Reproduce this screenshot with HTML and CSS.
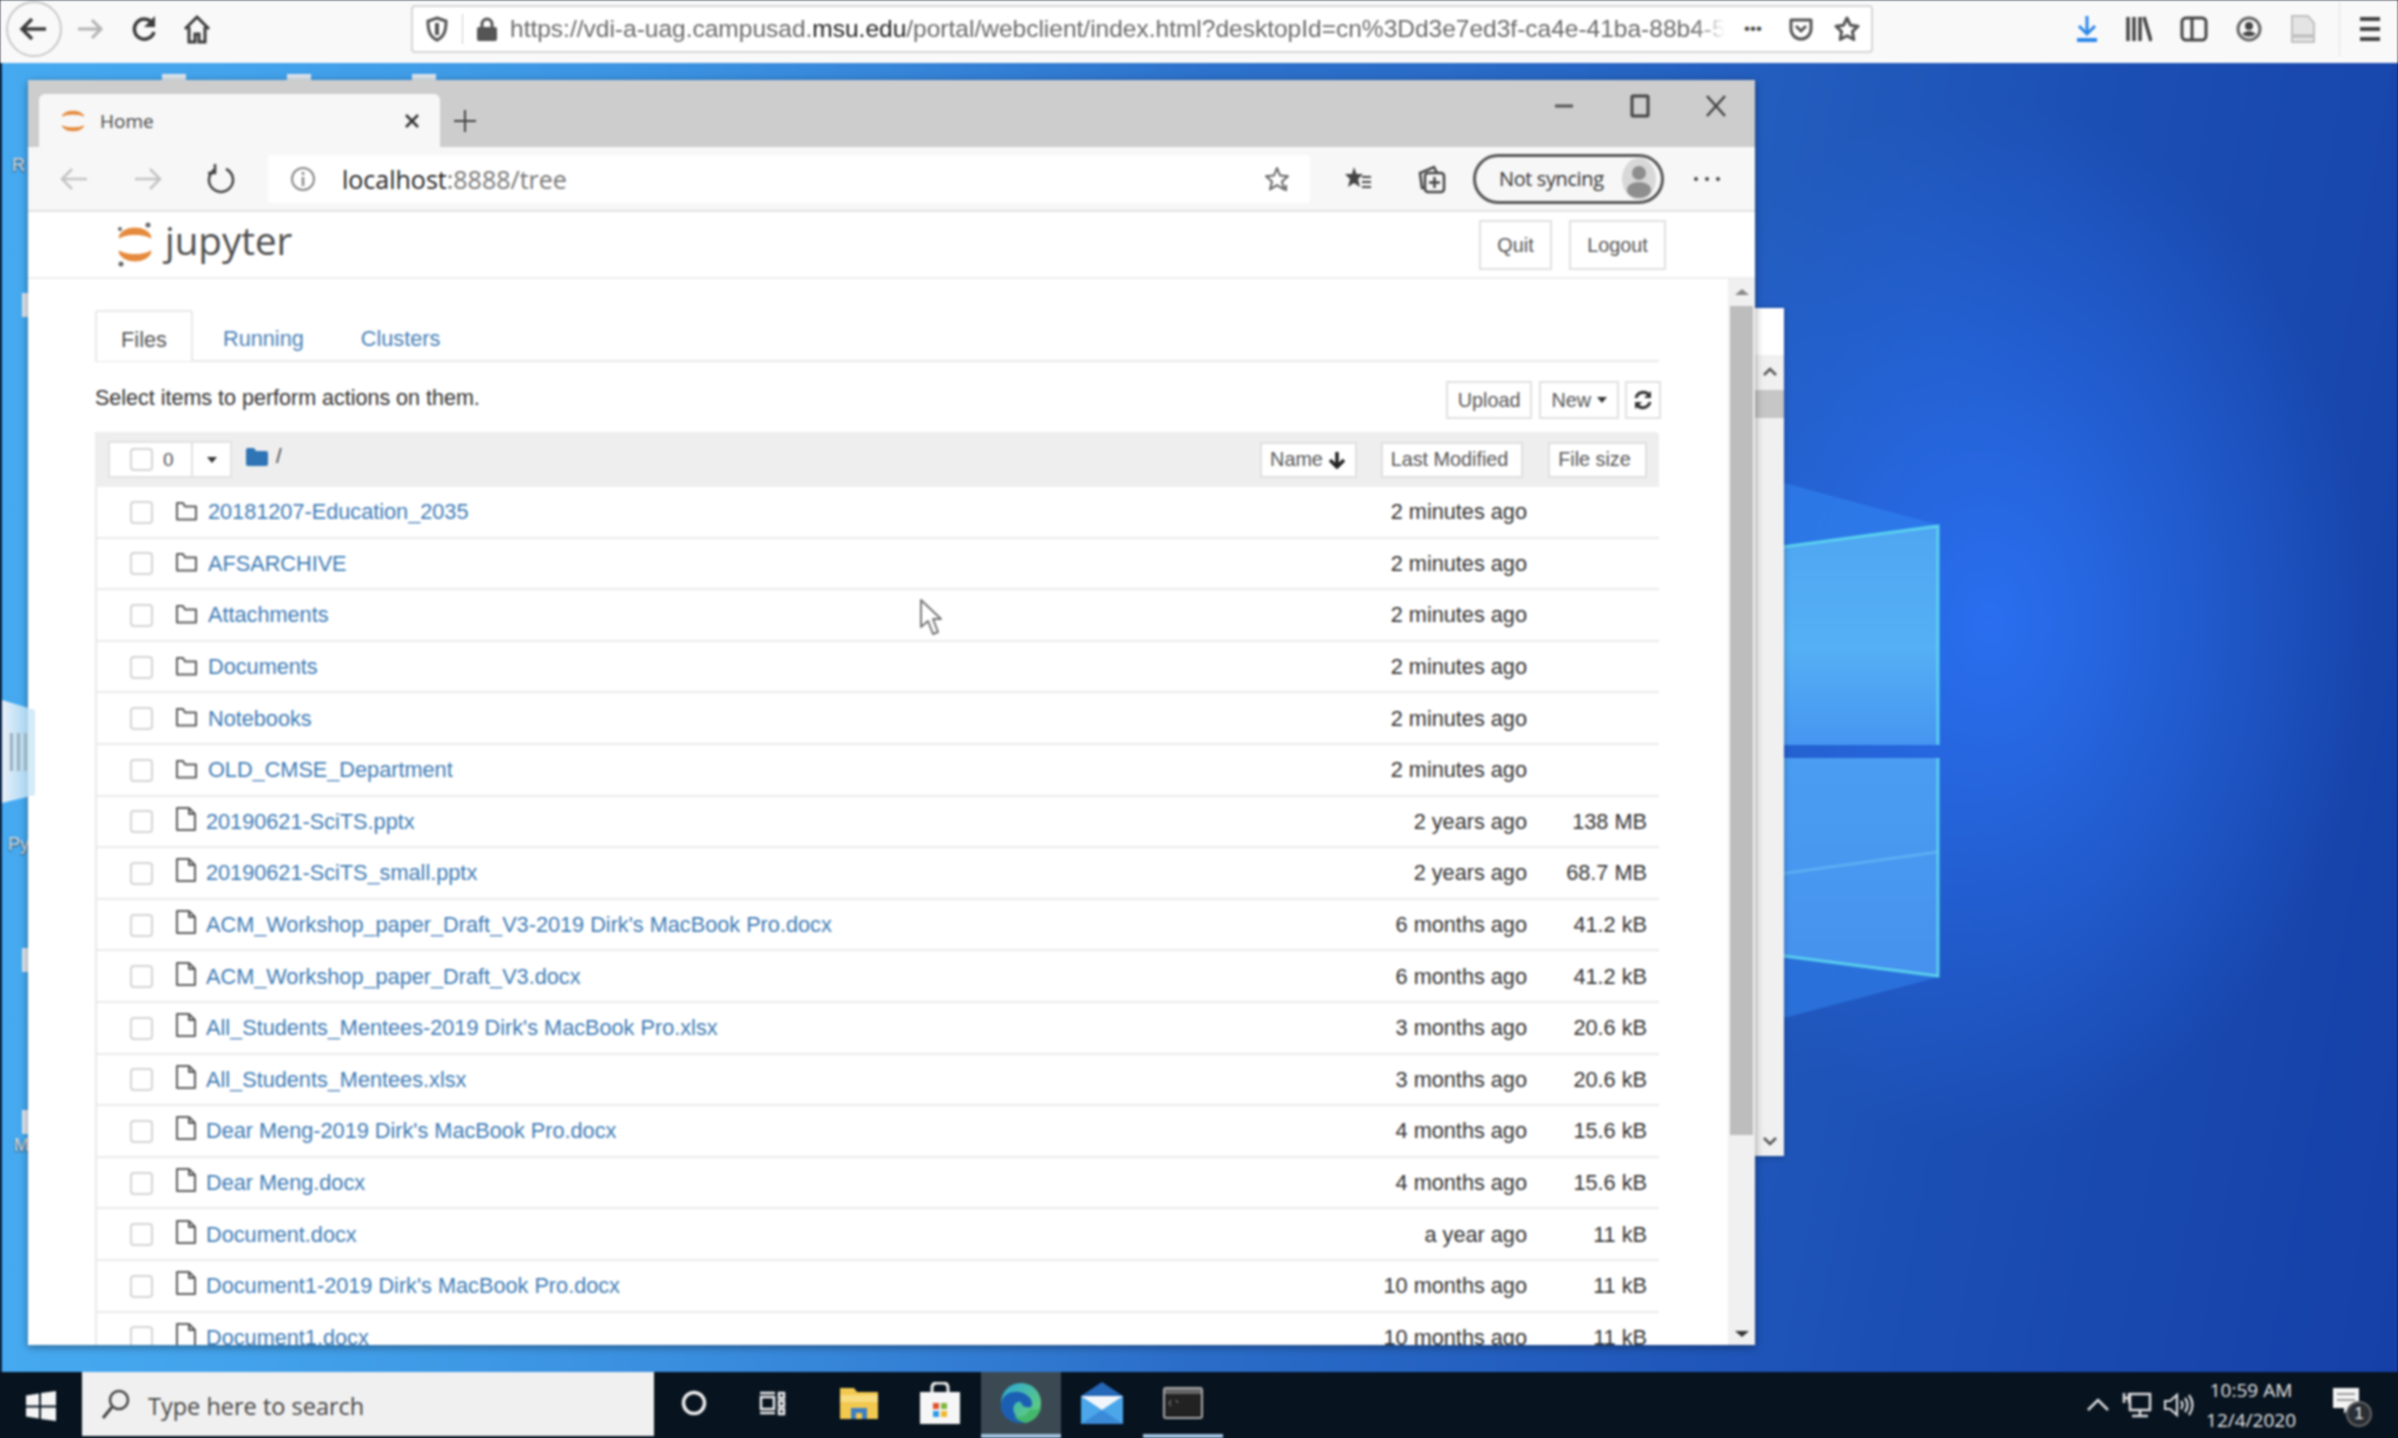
FILE: index.html
```html
<!DOCTYPE html>
<html lang="en">
<head>
    <meta charset="UTF-8">
    <title>Home</title>
    <link rel="stylesheet" href="styles.css">
</head>
<body>
    <svg class="sprites" width="0" height="0">
        <symbol id="folder" viewBox="0 0 23 20"><path d="M2 18.5h19V5.5H10L8 2H2z" fill="none" stroke="#5c5c5c" stroke-width="2" stroke-linejoin="round"/></symbol>
        <symbol id="file" viewBox="0 0 22 24"><path d="M2 23h18V7l-6-6H2zM14 1v6h6" fill="none" stroke="#5c5c5c" stroke-width="2" stroke-linejoin="round"/></symbol>
    </svg>

    <!-- outer firefox -->
    <div class="ff-bar">
        <div class="ff-back"><svg width="32" height="28" viewBox="0 0 32 28"><path d="M28 14H5M14 4L4 14l10 10" fill="none" stroke="#3c3c3c" stroke-width="3.5"/></svg></div>
        <svg class="ff-btn" width="28" height="26" viewBox="0 0 28 26"><path d="M2 13h23M16 4l9 9-9 9" fill="none" stroke="#b4b4b4" stroke-width="3"/></svg>
        <svg class="ff-btn reload" width="28" height="30" viewBox="0 0 28 30"><path d="M23 10a10 10 0 1 0 1 8" fill="none" stroke="#3c3c3c" stroke-width="3.5"/><path d="M25 2v11H14z" fill="#3c3c3c"/></svg>
        <svg class="ff-btn home" width="28" height="30" viewBox="0 0 28 30"><path d="M2 15L14 3l12 12M6 13v15h6v-8h4v8h6V13" fill="none" stroke="#3c3c3c" stroke-width="3"/></svg>
        <div class="ff-url">
            <svg width="22" height="26" viewBox="0 0 22 26"><path d="M11 2l9 3c0 10-2 16-9 19C4 21 2 15 2 5z" fill="none" stroke="#555" stroke-width="3"/><path d="M11 7v12" stroke="#555" stroke-width="4"/></svg>
            <span class="ff-url-sep"></span>
            <svg width="20" height="26" viewBox="0 0 20 26"><path d="M5 12V8a5 5 0 0 1 10 0v4" fill="none" stroke="#555" stroke-width="3"/><rect x="0" y="11" width="20" height="14" rx="2" fill="#555"/></svg>
            <div class="ff-url-text">https://vdi-a-uag.campusad.<b>msu.edu</b>/portal/webclient/index.html?desktopId=cn%3Dd3e7ed3f-ca4e-41ba-88b4-5</div>
            <span class="ff-dots">•••</span>
            <svg class="ff-pocket" width="24" height="24" viewBox="0 0 24 24"><path d="M2 3h20v9a10 10 0 0 1-20 0z" fill="none" stroke="#555" stroke-width="3" stroke-linejoin="round"/><path d="M7 9l5 5 5-5" fill="none" stroke="#555" stroke-width="3"/></svg>
            <svg class="ff-star" width="26" height="26" viewBox="0 0 26 26"><path d="M13 2l3.4 7.2 7.6 1-5.6 5.4 1.4 7.9-6.8-3.8-6.8 3.8 1.4-7.9L2 10.200l7.600-1z" fill="none" stroke="#555" stroke-width="3" stroke-linejoin="round"/></svg>
        </div>
        <div class="ff-tools">
            <svg width="22" height="28" viewBox="0 0 22 28"><path d="M11 1v18M3 11l8 8 8-8" fill="none" stroke="#2a86e8" stroke-width="3"/><path d="M1 25h20" stroke="#2a86e8" stroke-width="4"/></svg>
            <svg width="26" height="26" viewBox="0 0 26 26"><path d="M2 1v24M8 1v24M14 1v24M18 1l7 24" fill="none" stroke="#444" stroke-width="3.500"/></svg>
            <svg width="28" height="26" viewBox="0 0 28 26"><rect x="2" y="2" width="24" height="22" rx="4" fill="none" stroke="#444" stroke-width="3"/><path d="M12 2v22" stroke="#444" stroke-width="3"/></svg>
            <svg width="26" height="26" viewBox="0 0 26 26"><circle cx="13" cy="13" r="11" fill="none" stroke="#666" stroke-width="3"/><circle cx="13" cy="10" r="4" fill="#444"/><path d="M6 18q7-6 14 0q-7 5-14 0z" fill="#444"/></svg>
            <svg width="26" height="30" viewBox="0 0 26 30"><path d="M2 2h16l6 7v19H2z" fill="#e4e4e4" stroke="#c0c0c0" stroke-width="2"/><path d="M3 22h20" stroke="#bbb" stroke-width="3"/></svg>
            <span class="ff-tools-sep"></span>
            <div class="burger"><i></i><i></i><i></i></div>
        </div>
    </div>

    <!-- desktop -->
    <div class="desktop">
        <svg class="wallpaper" width="2398" height="1309" viewBox="0 63 2398 1309">
            <defs>
                <linearGradient id="pane1" x1="0" y1="0" x2="0" y2="1"><stop offset="0" stop-color="#4fa6f2"/><stop offset=".55" stop-color="#55b0f5"/><stop offset="1" stop-color="#4696f0"/></linearGradient>
                <linearGradient id="pane2" x1="0" y1="0" x2="0" y2="1"><stop offset="0" stop-color="#4a9df2"/><stop offset="1" stop-color="#4692ee"/></linearGradient>
            </defs>
            <polygon points="1939,525 1700,460 1700,560" fill="#2f80ee" opacity=".7"/>
            <polygon points="1939,977 1700,945 1700,1040" fill="#2f7be6" opacity=".7"/>
            <polygon points="1938,526 1700,558 1700,745 1938,745" fill="url(#pane1)"/>
            <polygon points="1938,758 1700,758 1700,945 1938,976" fill="url(#pane2)"/>
            <path d="M1700 885L1938 852" stroke="#62b4f6" stroke-width="3" opacity=".8"/>
            <path d="M1700 558L1938 526V745M1938 758V976L1700 945" fill="none" stroke="#5fdcf0" stroke-width="3" opacity=".85"/>
        </svg>

        <span class="desk-bit" id="bit-a"></span>
        <span class="desk-bit" id="bit-b"></span>
        <span class="desk-bit" id="bit-c"></span>
        <span class="desk-side" id="side-a"></span>
        <span class="desk-side" id="side-b"></span>
        <span class="desk-side" id="side-c"></span>
        <span class="desk-label" id="label-r">R</span>
        <span class="desk-label" id="label-py">Py</span>
        <span class="desk-label" id="label-m">M</span>

        <div class="back-window">
            <div class="back-top"></div>
            <div class="back-track">
                <svg width="16" height="10" viewBox="0 0 16 10"><path d="M2 8l6-6 6 6" fill="none" stroke="#555" stroke-width="2.500"/></svg>
                <div class="back-thumb"></div>
                <svg class="back-down" width="16" height="10" viewBox="0 0 16 10"><path d="M2 2l6 6 6-6" fill="none" stroke="#555" stroke-width="2.500"/></svg>
            </div>
        </div>

        <!-- edge window -->
        <div class="window">
            <div class="win-title">
                <div class="tab">
                    <svg width="26" height="30" viewBox="0 0 26 30"><path d="M2 10a12 8 0 0 1 22 0a14 5 0 0 0-22 0zM2 20a12 8 0 0 0 22 0a14 5 0 0 1-22 0z" fill="#e58a3c" stroke="#e58a3c"/></svg>
                    <span class="tab-label">Home</span>
                    <svg class="tab-close" width="16" height="16" viewBox="0 0 16 16"><path d="M2 2l12 12M14 2L2 14" stroke="#333" stroke-width="2.500"/></svg>
                </div>
                <svg class="tab-new" width="24" height="24" viewBox="0 0 24 24"><path d="M12 1v22M1 12h22" stroke="#444" stroke-width="2"/></svg>
                <div class="win-controls">
                    <svg width="20" height="20" viewBox="0 0 20 20"><path d="M1 10h18" stroke="#555" stroke-width="3"/></svg>
                    <svg width="20" height="24" viewBox="0 0 20 24"><rect x="2" y="2" width="16" height="20" rx="1" fill="none" stroke="#444" stroke-width="3"/></svg>
                    <svg width="20" height="22" viewBox="0 0 20 22"><path d="M1 1l18 20M19 1L1 21" stroke="#444" stroke-width="2.500"/></svg>
                </div>
            </div>
            <div class="win-toolbar">
                <svg class="nav-back" width="28" height="26" viewBox="0 0 28 26"><path d="M27 13H2M12 3L2 13l10 10" fill="none" stroke="#c4c4c4" stroke-width="2.500"/></svg>
                <svg class="nav-forward" width="28" height="26" viewBox="0 0 28 26"><path d="M1 13h25M16 3l10 10-10 10" fill="none" stroke="#c4c4c4" stroke-width="2.500"/></svg>
                <svg class="nav-reload" width="30" height="32" viewBox="0 0 30 32"><path d="M10 6a12 12 0 1 0 10 0" fill="none" stroke="#444" stroke-width="2.500"/><path d="M9 1v9H2" fill="none" stroke="#444" stroke-width="2.500"/></svg>
                <div class="edge-url">
                    <svg width="26" height="28" viewBox="0 0 26 28"><circle cx="13" cy="14" r="11" fill="none" stroke="#888" stroke-width="2"/><path d="M13 12v9M13 7v3" stroke="#888" stroke-width="2.500"/></svg>
                    <span class="edge-url-text">localhost<em>:8888/tree</em></span>
                    <svg class="edge-star" width="28" height="28" viewBox="0 0 28 28"><path d="M13 3l3 7.500 8 .7-6 5.300 2 8-7-4.300-7 4.300 2-8-6-5.300 8-.7z" fill="none" stroke="#666" stroke-width="2" stroke-linejoin="round"/><path d="M22 20v6" stroke="#666" stroke-width="2"/></svg>
                </div>
                <svg class="edge-tool" width="28" height="28" viewBox="0 0 28 28"><path d="M10 2l2.500 7H19l-5 5 2 8-6-4-6 4 2-8-5-5h7z" fill="#444"/><path d="M18 12h9M18 17h9M18 22h9" stroke="#444" stroke-width="2"/></svg>
                <svg class="edge-tool" width="28" height="30" viewBox="0 0 28 30"><rect x="7" y="9" width="19" height="19" rx="3" fill="none" stroke="#444" stroke-width="2.500"/><path d="M7 24H4L2 9l14-6 3 6" fill="none" stroke="#444" stroke-width="2.500"/><path d="M16.500 13v11M11 18.500h11" stroke="#444" stroke-width="2.500"/></svg>
                <div class="sync-pill">
                    <span>Not syncing</span>
                    <svg width="34" height="42" viewBox="0 0 34 42"><ellipse cx="17" cy="21" rx="17" ry="21" fill="#d8d8d8"/><circle cx="17" cy="15" r="7" fill="#8e8e8e"/><ellipse cx="17" cy="32" rx="12" ry="8" fill="#8e8e8e"/></svg>
                </div>
                <div class="edge-more"><i></i><i></i><i></i></div>
            </div>

            <div class="jp-header">
                <svg class="jp-logo" width="38" height="46" viewBox="0 0 38 46"><path d="M3 17a16 10 0 0 1 32 0a20 9 0 0 0-32 0zM3 30a16 10 0 0 0 32 0a20 9 0 0 1-32 0z" fill="#e58a3c" stroke="#e58a3c"/><circle cx="32" cy="4" r="2.500" fill="#666"/><circle cx="4" cy="8" r="2" fill="#666"/><circle cx="5" cy="43" r="2.500" fill="#666"/></svg>
                <span class="jp-name">jupyter</span>
                <a class="btn jp-quit">Quit</a>
                <a class="btn jp-logout">Logout</a>
            </div>

            <div class="win-page">
                <div class="page-main">
                    <div class="nav-tabs">
                        <span class="nav-tab active">Files</span>
                        <span class="nav-tab">Running</span>
                        <span class="nav-tab">Clusters</span>
                    </div>

                    <div class="action-row">
                        <span class="hint">Select items to perform actions on them.</span>
                        <a class="btn btn-small">Upload</a>
                        <a class="btn btn-small">New <i class="caret"></i></a>
                        <a class="btn btn-small btn-icon"><svg width="20" height="20" viewBox="0 0 20 20"><path d="M3 8a7.500 7.500 0 0 1 13-3M17 12a7.500 7.500 0 0 1-13 3" fill="none" stroke="#333" stroke-width="3"/><path d="M18 1v7h-7zM2 19v-7h7z" fill="#333"/></svg></a>
                    </div>

                    <div class="list">
                        <div class="list-head">
                            <div class="select-group">
                                <div class="select-left"><span class="check"></span><span>0</span></div>
                                <div class="select-right"><i class="caret"></i></div>
                            </div>
                            <svg class="crumb-icon" width="22" height="18" viewBox="0 0 22 18"><path d="M0 2q0-2 2-2h6l2 3h10q2 0 2 2v11q0 2-2 2H2q-2 0-2-2z" fill="#2f75b5"/></svg>
                            <span class="crumb">/</span>
                            <a class="btn sort sort-name">Name <svg width="16" height="18" viewBox="0 0 16 18"><path d="M8 1v15M1 9l7 7 7-7" fill="none" stroke="#222" stroke-width="3.500"/></svg></a>
                            <a class="btn sort sort-mod">Last Modified</a>
                            <a class="btn sort sort-size">File size</a>
                        </div>

                        <div class="row"><span class="check"></span><svg class="ico"><use href="#folder"/></svg><a class="name">20181207-Education_2035</a><span class="time">2 minutes ago</span><span class="size"></span></div>
                        <div class="row"><span class="check"></span><svg class="ico"><use href="#folder"/></svg><a class="name">AFSARCHIVE</a><span class="time">2 minutes ago</span><span class="size"></span></div>
                        <div class="row"><span class="check"></span><svg class="ico"><use href="#folder"/></svg><a class="name">Attachments</a><span class="time">2 minutes ago</span><span class="size"></span></div>
                        <div class="row"><span class="check"></span><svg class="ico"><use href="#folder"/></svg><a class="name">Documents</a><span class="time">2 minutes ago</span><span class="size"></span></div>
                        <div class="row"><span class="check"></span><svg class="ico"><use href="#folder"/></svg><a class="name">Notebooks</a><span class="time">2 minutes ago</span><span class="size"></span></div>
                        <div class="row"><span class="check"></span><svg class="ico"><use href="#folder"/></svg><a class="name">OLD_CMSE_Department</a><span class="time">2 minutes ago</span><span class="size"></span></div>
                        <div class="row"><span class="check"></span><svg class="ico file"><use href="#file"/></svg><a class="name">20190621-SciTS.pptx</a><span class="time">2 years ago</span><span class="size">138 MB</span></div>
                        <div class="row"><span class="check"></span><svg class="ico file"><use href="#file"/></svg><a class="name">20190621-SciTS_small.pptx</a><span class="time">2 years ago</span><span class="size">68.7 MB</span></div>
                        <div class="row"><span class="check"></span><svg class="ico file"><use href="#file"/></svg><a class="name">ACM_Workshop_paper_Draft_V3-2019 Dirk's MacBook Pro.docx</a><span class="time">6 months ago</span><span class="size">41.2 kB</span></div>
                        <div class="row"><span class="check"></span><svg class="ico file"><use href="#file"/></svg><a class="name">ACM_Workshop_paper_Draft_V3.docx</a><span class="time">6 months ago</span><span class="size">41.2 kB</span></div>
                        <div class="row"><span class="check"></span><svg class="ico file"><use href="#file"/></svg><a class="name">All_Students_Mentees-2019 Dirk's MacBook Pro.xlsx</a><span class="time">3 months ago</span><span class="size">20.6 kB</span></div>
                        <div class="row"><span class="check"></span><svg class="ico file"><use href="#file"/></svg><a class="name">All_Students_Mentees.xlsx</a><span class="time">3 months ago</span><span class="size">20.6 kB</span></div>
                        <div class="row"><span class="check"></span><svg class="ico file"><use href="#file"/></svg><a class="name">Dear Meng-2019 Dirk's MacBook Pro.docx</a><span class="time">4 months ago</span><span class="size">15.6 kB</span></div>
                        <div class="row"><span class="check"></span><svg class="ico file"><use href="#file"/></svg><a class="name">Dear Meng.docx</a><span class="time">4 months ago</span><span class="size">15.6 kB</span></div>
                        <div class="row"><span class="check"></span><svg class="ico file"><use href="#file"/></svg><a class="name">Document.docx</a><span class="time">a year ago</span><span class="size">11 kB</span></div>
                        <div class="row"><span class="check"></span><svg class="ico file"><use href="#file"/></svg><a class="name">Document1-2019 Dirk's MacBook Pro.docx</a><span class="time">10 months ago</span><span class="size">11 kB</span></div>
                        <div class="row"><span class="check"></span><svg class="ico file"><use href="#file"/></svg><a class="name">Document1.docx</a><span class="time">10 months ago</span><span class="size">11 kB</span></div>
                    </div>
                </div>
                <div class="page-scroll">
                    <i class="tri-up"></i>
                    <div class="page-thumb"></div>
                    <i class="tri-down"></i>
                </div>
            </div>
        </div>

        <svg class="cursor" width="24" height="38" viewBox="0 0 24 38"><path d="M2 2v27l7-6 5 13 5-2-5-13h8z" fill="#fff" stroke="#777" stroke-width="2" stroke-linejoin="round"/></svg>
        <div class="side-handle"><i></i><i></i><i></i></div>
    </div>

    <!-- taskbar -->
    <div class="taskbar">
        <svg class="start" width="30" height="30" viewBox="0 0 30 30"><path d="M0 4.500l13-2v12H0zM15 2l15-2v14.500H15zM0 16.500h13v11l-13-2zM15 16.500h15V30l-15-2z" fill="#f4f4f4"/></svg>
        <div class="search">
            <svg width="30" height="32" viewBox="0 0 30 32"><circle cx="18" cy="12" r="9" fill="none" stroke="#444" stroke-width="2.500"/><path d="M11 19L2 30" stroke="#444" stroke-width="3"/></svg>
            <span>Type here to search</span>
        </div>
        <div class="task-icons">
            <div class="task"><svg width="26" height="26" viewBox="0 0 26 26"><circle cx="13" cy="13" r="10.500" fill="none" stroke="#eee" stroke-width="3.500"/></svg></div>
            <div class="task task-view"><svg width="28" height="26" viewBox="0 0 28 26"><path d="M2 3h15M2 23h15M3 7h13v12H3zM21 3h5v5h-5zM21 11h5v5h-5zM21 19h5v5h-5z" fill="none" stroke="#eee" stroke-width="2.500"/></svg></div>
            <div class="task"><svg width="38" height="32" viewBox="0 0 38 32"><path d="M0 1h14l3 4h21v27H0z" fill="#f2c84f"/><rect x="0" y="8" width="38" height="7" fill="#f8dc80"/><path d="M11 32V21h16v11h-5v-6h-6v6z" fill="#3d7fc4"/></svg></div>
            <div class="task"><svg width="40" height="42" viewBox="0 0 40 42"><path d="M12 10V6q0-5 5-5h6q5 0 5 5v4" fill="none" stroke="#eee" stroke-width="3"/><rect x="0" y="10" width="40" height="32" fill="#f6f6f6"/><rect x="13" y="21" width="6" height="6" fill="#e0512f"/><rect x="21" y="21" width="6" height="6" fill="#7fb83c"/><rect x="13" y="29" width="6" height="6" fill="#2e9be5"/><rect x="21" y="29" width="6" height="6" fill="#f2b731"/></svg></div>
            <div class="task active"><svg width="42" height="42" viewBox="0 0 42 42"><defs><linearGradient id="edgeg" x1="0" y1="0" x2="1" y2="1"><stop offset="0" stop-color="#2ba8d8"/><stop offset="1" stop-color="#6cd46a"/></linearGradient></defs><circle cx="21" cy="21" r="20" fill="url(#edgeg)"/><path d="M1 22C2 10 18 6 28 14c4 3 5 8 3 11-4 1-9 0-10-5-7-2-11 8-4 15 3 3 6 5 10 6C12 43 0 35 1 22z" fill="#1b5fb4"/><path d="M30 27c3 1 8 1 11-2-1 8-7 14-15 16-5-1-9-3-12-7 6 3 13 0 16-7z" fill="#43b76c"/></svg></div>
            <div class="task"><svg width="42" height="42" viewBox="0 0 42 42"><path d="M21 0L0 14h42z" fill="#2567b8"/><rect x="0" y="14" width="42" height="28" fill="#4ba6ea"/><path d="M0 14h42L21 28z" fill="#f2f6fa"/><path d="M0 42l21-14 21 14z" fill="#3a8ad8"/></svg></div>
            <div class="task running"><svg width="40" height="32" viewBox="0 0 40 32"><rect x="1" y="1" width="38" height="30" rx="2" fill="#222" stroke="#aaa" stroke-width="2"/><rect x="2" y="2" width="36" height="5" fill="#666"/><path d="M8 13l-2 3 2 3M13 13l2 3" stroke="#999" fill="none"/></svg></div>
        </div>
        <div class="tray">
            <svg width="24" height="14" viewBox="0 0 24 14"><path d="M2 12L12 2l10 10" fill="none" stroke="#ddd" stroke-width="2.500"/></svg>
            <svg width="30" height="26" viewBox="0 0 30 26"><path d="M8 2h20v16H8zM18 18v6M10 24h16M2 1v10M7 1v10M1 6h7" fill="none" stroke="#ddd" stroke-width="2.500"/></svg>
            <svg width="30" height="26" viewBox="0 0 30 26"><path d="M1 9h5l7-6v20l-7-6H1zM17 9q3 4 0 8M21 6q5 7 0 14M25 3q7 10 0 20" fill="none" stroke="#ddd" stroke-width="2.200"/></svg>
            <div class="clock"><span>10:59 AM</span><span>12/4/2020</span></div>
            <div class="notify">
                <svg width="30" height="30" viewBox="0 0 30 30"><path d="M1 1h26v20h-10l-5 6v-6H1z" fill="#f4f4f4"/><path d="M5 7h18M5 13h18" stroke="#999" stroke-width="2"/></svg>
                <span class="notify-badge">1</span>
            </div>
        </div>
    </div>
</body>
</html>
```

FILE: styles.css
```css
* {
    box-sizing: border-box;
}
html, body {
    margin: 0;
    height: 1438px;
    overflow: hidden;
}
body {
    width: 2398px;
    display: flex;
    flex-direction: column;
    font-family: "Liberation Sans", Arial, sans-serif;
    font-size: 21.7px;
    color: #333;
    background: #07131f;
    filter: blur(0.8px);
}
svg {
    flex: none;
    display: block;
}
.sprites {
    position: absolute;
}

/* outer firefox */
.ff-bar {
    height: 63px;
    flex: none;
    padding-bottom: 5px;
    display: flex;
    align-items: center;
    background: #f9f9fa;
}
.ff-back {
    width: 56px;
    height: 56px;
    margin-left: 6px;
    display: flex;
    align-items: center;
    justify-content: center;
    border: 2px solid #c8c8c8;
    border-radius: 50%;
}
.ff-btn {
    margin-left: 14px;
}
.ff-btn.reload {
    margin-left: 26px;
}
.ff-btn.home {
    margin-left: 25px;
}
.ff-url {
    width: 1462px;
    height: 48px;
    margin-left: 200px;
    padding: 0 0 0 13px;
    display: flex;
    align-items: center;
    gap: 14px;
    background: #fff;
    border: 2px solid #d6d6d8;
    border-radius: 4px;
}
.ff-url-sep {
    width: 1px;
    height: 30px;
    background: #ccc;
}
.ff-url-text {
    width: 1215px;
    margin-left: -1px;
    overflow: hidden;
    white-space: nowrap;
    font-size: 24.5px;
    color: #6a6a6a;
    -webkit-mask-image: linear-gradient(to left, transparent, #000 30px);
    mask-image: linear-gradient(to left, transparent, #000 30px);
}
.ff-url-text b {
    font-weight: normal;
    color: #222;
}
.ff-dots {
    font-size: 17px;
    color: #444;
    margin-left: 5px;
}
.ff-pocket {
    margin-left: 13px;
}
.ff-star {
    margin-left: 7px;
}
.ff-tools {
    flex: 1;
    padding-left: 203px;
    display: flex;
    align-items: center;
    gap: 28px;
}
.ff-tools-sep {
    width: 1px;
    height: 54px;
    margin-left: -5px;
    background: #e2e2e2;
}
.burger {
    display: flex;
    flex-direction: column;
    gap: 6px;
    margin-left: -8px;
}
.burger i {
    width: 20px;
    height: 4px;
    background: #444;
}

/* desktop and wallpaper */
.desktop {
    flex: 1;
    position: relative;
    overflow: hidden;
    background:
        radial-gradient(ellipse 380px 520px at 1990px 560px, #2a6ff0 0%, rgba(42, 111, 240, 0) 100%),
        linear-gradient(90deg, rgba(70, 170, 240, 1) 0, rgba(70, 170, 240, 0) 50%),
        linear-gradient(100deg, #3a8ee0 0%, #2a6cc8 55%, #1c4fb4 80%, #1540a8 100%);
    box-shadow: inset 2px 0 0 #0a2a55;
}
.wallpaper {
    position: absolute;
    left: 0;
    top: 0;
}
.desk-bit {
    position: absolute;
    top: 11px;
    width: 24px;
    height: 6px;
    background: #dfe7ee;
}
#bit-a { left: 162px; }
#bit-b { left: 287px; }
#bit-c { left: 412px; }
.desk-side {
    position: absolute;
    left: 22px;
    width: 6px;
    height: 24px;
    background: #dfe7ee;
}
#side-a { top: 230px; }
#side-b { top: 885px; }
#side-c { top: 1047px; }
.desk-label {
    position: absolute;
    color: #d8dee4;
    font-size: 18px;
    text-shadow: 0 1px 2px #333;
}
#label-r { left: 12px; top: 92px; }
#label-py { left: 8px; top: 771px; }
#label-m { left: 14px; top: 1072px; }

.back-window {
    position: absolute;
    left: 1755px;
    top: 245px;
    width: 29px;
    height: 848px;
    display: flex;
    flex-direction: column;
    box-shadow: 0 1px 6px rgba(0, 0, 0, 0.3);
}
.back-top {
    height: 47px;
    background: #fff;
}
.back-track {
    flex: 1;
    display: flex;
    flex-direction: column;
    align-items: center;
    padding: 12px 0 10px;
    background: #f0f0f0;
}
.back-thumb {
    width: 100%;
    height: 28px;
    margin-top: 13px;
    background: #c6c6c6;
}
.back-down {
    margin-top: auto;
}

/* edge window */
.window {
    position: absolute;
    left: 28px;
    top: 17px;
    width: 1727px;
    height: 1265px;
    display: flex;
    flex-direction: column;
    background: #fff;
    box-shadow: 0 2px 8px rgba(0, 0, 0, 0.4);
}
.win-title {
    height: 67px;
    flex: none;
    display: flex;
    align-items: flex-end;
    background: #cdcdcd;
}
.tab {
    width: 401px;
    height: 53px;
    margin-left: 11px;
    padding: 0 21px;
    display: flex;
    align-items: center;
    background: #f7f7f7;
    border-radius: 6px 6px 0 0;
}
.tab-label {
    margin-left: 14px;
    font-family: "Open Sans", sans-serif;
    font-size: 19px;
    color: #444;
}
.tab-close {
    margin-left: auto;
    margin-right: -1px;
}
.tab-new {
    margin: 0 0 14px 13px;
}
.win-controls {
    margin-left: auto;
    align-self: flex-start;
    padding: 14px 29px 0 0;
    display: flex;
    align-items: center;
    gap: 56px;
}
.win-toolbar {
    height: 65px;
    flex: none;
    display: flex;
    align-items: center;
    background: #f7f7f7;
    border-bottom: 2px solid #e2e2e2;
}
.nav-back {
    margin-left: 32px;
}
.nav-forward {
    margin-left: 46px;
}
.nav-reload {
    margin-left: 44px;
}
.edge-url {
    width: 1042px;
    height: 48px;
    margin-left: 32px;
    padding: 0 18px 0 22px;
    display: flex;
    align-items: center;
    background: #fff;
    border-radius: 3px;
}
.edge-url-text {
    margin-left: 26px;
    font-family: "Open Sans", sans-serif;
    font-size: 25px;
    color: #222;
}
.edge-url-text em {
    font-style: normal;
    color: #777;
}
.edge-star {
    margin-left: auto;
}
.edge-tool {
    margin-left: 34px;
}
.edge-tool + .edge-tool {
    margin-left: 46px;
}
.sync-pill {
    width: 191px;
    height: 50px;
    margin-left: 27px;
    padding: 0 5px 0 23px;
    display: flex;
    align-items: center;
    justify-content: space-between;
    border: 3px solid #555;
    border-radius: 25px;
    font-family: "Open Sans", sans-serif;
    font-size: 20px;
    letter-spacing: -0.4px;
    color: #333;
}
.edge-more {
    margin-left: 30px;
    display: flex;
    gap: 7px;
}
.edge-more i {
    width: 4px;
    height: 4px;
    background: #444;
    border-radius: 50%;
}
.win-page {
    flex: 1;
    min-height: 0;
    display: flex;
}
.page-main {
    flex: 1;
    min-width: 0;
    padding: 32px 69px 0 67px;
    overflow: hidden;
}

/* jupyter */
.jp-header {
    height: 67px;
    flex: none;
    padding: 8px 89px 0 90px;
    display: flex;
    align-items: flex-start;
    border-bottom: 2px solid #eee;
}
.jp-logo {
    margin: 1px 0 0 -2px;
}
.jp-name {
    margin: -3px 0 0 11px;
    font-family: "Open Sans", sans-serif;
    font-size: 38.5px;
    line-height: 46px;
    color: #4e4e4e;
}
.btn {
    display: flex;
    align-items: center;
    justify-content: center;
    gap: 6px;
    background: #fff;
    border: 2px solid #e0e0e0;
    color: #555;
    font-size: 19.8px;
}
.jp-quit {
    width: 73px;
    height: 50px;
    margin-left: auto;
}
.jp-logout {
    width: 97px;
    height: 50px;
    margin-left: 17px;
}
.nav-tabs {
    height: 51px;
    display: flex;
    gap: 30px;
    align-items: center;
    border-bottom: 2px solid #e8e8e8;
}
.nav-tab {
    padding-top: 6px;
    color: #4a82b8;
    font-size: 21.7px;
}
.nav-tab:last-child {
    margin-left: 27px;
}
.nav-tab.active {
    width: 98px;
    height: 51px;
    display: flex;
    align-items: center;
    justify-content: center;
    background: #fff;
    border: 2px solid #e8e8e8;
    border-bottom: 0;
    border-radius: 3px 3px 0 0;
    color: #555;
}
.action-row {
    height: 38px;
    margin-top: 19px;
    display: flex;
    align-items: center;
    gap: 6px;
}
.hint {
    margin-right: auto;
    margin-top: -3px;
    font-size: 21.5px;
}
.btn-small {
    height: 38px;
    padding: 0 10px;
    min-width: 83px;
}
.btn-small + .btn-small {
    min-width: 78px;
}
.btn-small.btn-icon {
    min-width: 36px;
    width: 36px;
    padding: 0;
    margin-right: -2px;
}
.btn-small:first-of-type {
    margin-right: 1px;
}
.caret {
    width: 0;
    height: 0;
    border: 5px solid transparent;
    border-top: 6px solid #333;
    border-bottom: 0;
}
.list {
    margin-top: 13px;
    border-left: 2px solid #e8e8e8;
}
.list-head {
    height: 55px;
    margin-left: -2px;
    padding-left: 13px;
    padding-right: 12px;
    display: flex;
    align-items: center;
    background: #eee;
    border-radius: 4px 4px 0 0;
}
.select-group {
    width: 124px;
    height: 37px;
    display: flex;
    background: #fff;
    border: 2px solid #e2e2e2;
}
.select-left {
    width: 81px;
    padding-left: 20px;
    display: flex;
    align-items: center;
    gap: 10px;
    color: #555;
    font-size: 19px;
}
.select-right {
    flex: 1;
    display: flex;
    align-items: center;
    justify-content: center;
    border-left: 2px solid #e2e2e2;
}
.crumb-icon {
    margin: -6px 0 0 14px;
}
.crumb {
    margin: -6px 0 0 8px;
    color: #444;
    font-size: 20px;
}
.sort {
    height: 36px;
    font-size: 19.8px;
}
.sort-name {
    width: 97px;
    margin-left: auto;
    padding-right: 2px;
}
.sort-mod {
    width: 142px;
    margin-left: 24px;
    padding-right: 5px;
}
.sort-size {
    width: 99px;
    margin-left: 25px;
    padding-right: 6px;
}
.check {
    flex: none;
    width: 23px;
    height: 23px;
    background: #fff;
    border: 2px solid #d4d4d4;
    border-radius: 4px;
}
.row {
    height: 51.6px;
    padding-top: 1px;
    padding-left: 33px;
    padding-right: 12px;
    display: flex;
    align-items: center;
    border-bottom: 2px solid #eaeaea;
}
.ico {
    width: 23px;
    height: 20px;
    margin: -3px 10px 0 22px;
}
.ico.file {
    width: 22px;
    height: 24px;
    margin: -6px 9px 0 22px;
}
.name {
    flex: 1;
    color: #3f7cb5;
    white-space: nowrap;
}
.time {
    width: 220px;
    text-align: right;
}
.size {
    width: 120px;
    text-align: right;
}

/* inner scrollbar */
.page-scroll {
    width: 27px;
    flex: none;
    padding: 10px 2px 8px;
    display: flex;
    flex-direction: column;
    align-items: center;
    background: #f0f0f0;
}
.tri-up, .tri-down {
    width: 0;
    height: 0;
    border: 7px solid transparent;
}
.tri-up {
    border-top: 0;
    border-bottom: 6px solid #888;
}
.tri-down {
    margin-top: auto;
    border-bottom: 0;
    border-top: 6px solid #333;
}
.page-thumb {
    width: 100%;
    height: 829px;
    margin-top: 11px;
    background: #bdbdbd;
}

.cursor {
    position: absolute;
    left: 919px;
    top: 535px;
}
.side-handle {
    position: absolute;
    left: 2px;
    top: 637px;
    width: 33px;
    height: 103px;
    padding-left: 8px;
    display: flex;
    align-items: center;
    gap: 4px;
    background: linear-gradient(90deg, rgba(240, 244, 248, 0.95), rgba(190, 225, 245, 0.7));
    border-radius: 0 8px 8px 0;
    clip-path: polygon(0 0, 100% 10px, 100% 95px, 0 100%);
}
.side-handle i {
    width: 3px;
    height: 38px;
    background: #9fb0bc;
}

/* taskbar */
.taskbar {
    height: 66px;
    flex: none;
    display: flex;
    align-items: stretch;
    background: #07131f;
}
.start {
    margin: 19px 26px 0 26px;
}
.search {
    width: 572px;
    height: 64px;
    padding-left: 19px;
    display: flex;
    align-items: center;
    gap: 17px;
    background: #f0f0f0;
    font-family: "Open Sans", sans-serif;
    font-size: 23.5px;
    color: #444;
}
.search span {
    padding-top: 4px;
}
.task-icons {
    padding-left: 0;
    display: flex;
}
.task {
    width: 80px;
    height: 66px;
    margin-right: 1px;
    padding-bottom: 4px;
    display: flex;
    align-items: center;
    justify-content: center;
}
.task-view {
    margin-left: -3px;
    margin-right: 7px;
}
.task.active {
    background: #3b4a52;
    border-bottom: 4px solid #a3c4e2;
    padding-bottom: 0;
}
.task.running {
    border-bottom: 4px solid #a3c4e2;
    padding-bottom: 0;
}
.tray {
    margin-left: auto;
    padding-right: 30px;
    display: flex;
    align-items: center;
    color: #e8e8e8;
}
.tray > svg + svg {
    margin-left: 12px;
}
.clock {
    margin-left: 12px;
    display: flex;
    flex-direction: column;
    align-items: center;
    gap: 7px;
    font-family: "Open Sans", sans-serif;
    font-size: 19px;
    line-height: 23px;
}
.notify {
    position: relative;
    margin-left: 36px;
    width: 36px;
    height: 36px;
}
.notify-badge {
    position: absolute;
    right: -4px;
    bottom: -4px;
    width: 26px;
    height: 26px;
    display: flex;
    align-items: center;
    justify-content: center;
    background: #2a2f35;
    border: 2px solid #666;
    border-radius: 50%;
    font-size: 17px;
    color: #eee;
}
```
